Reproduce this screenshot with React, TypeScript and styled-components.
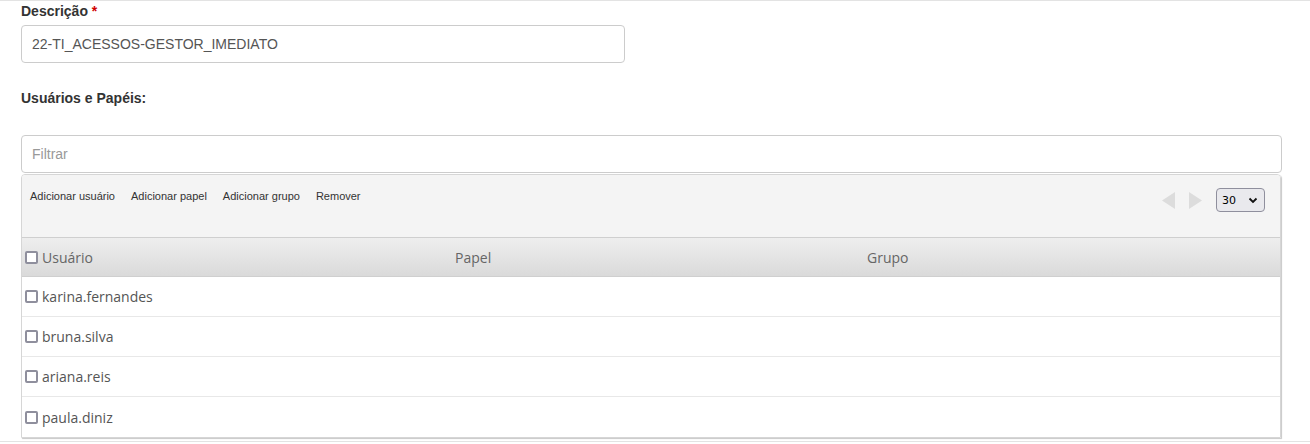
import React from "react";
import styled, { createGlobalStyle } from "styled-components";

const GlobalStyle = createGlobalStyle`
  html, body { margin: 0; padding: 0; background: #ffffff; }
  body { font-family: "Liberation Sans", Arial, sans-serif; }
  * { box-sizing: border-box; }
`;

const Page = styled.div`
  width: 1310px;
  border-top: 1px solid #e3e3e3;
  border-bottom: 1px solid #e3e3e3;
  padding: 0 28px 3px 21px;
`;

const Label = styled.div<{ $mt?: number }>`
  font-family: "Liberation Sans", Arial, sans-serif;
  font-size: 14px;
  font-weight: bold;
  line-height: 18px;
  color: #333;
  margin-top: ${(p) => p.$mt ?? 0}px;
`;

const Required = styled.span`
  color: #d00000;
`;

const TextInput = styled.input<{ $width?: string; $mt?: number }>`
  display: block;
  width: ${(p) => p.$width ?? "100%"};
  height: 38px;
  margin-top: ${(p) => p.$mt ?? 0}px;
  padding: 0 10px;
  border: 1px solid #cccccc;
  border-radius: 4px;
  font-family: "Liberation Sans", Arial, sans-serif;
  font-size: 14px;
  color: #555;
  background: #fff;
  outline: none;
  &::placeholder { color: #999; }
`;

const Panel = styled.div`
  margin-top: 1px;
  width: 1260px;
  border: 1px solid #d6d6d6;
  border-radius: 4px 4px 0 0;
  box-shadow: 1px 1px 1px #c8c8c8;
  overflow: hidden;
`;

const Toolbar = styled.div`
  height: 62px;
  background: #f4f4f4;
  display: flex;
  justify-content: space-between;
  align-items: flex-start;
  padding-right: 15px;
`;

const Actions = styled.div`
  display: flex;
  margin-top: 14px;
`;

const ActionButton = styled.span`
  padding: 0 8px;
  font-family: "Liberation Sans", Arial, sans-serif;
  font-size: 11px;
  line-height: 14px;
  color: #333;
  cursor: pointer;
`;

const Pager = styled.div`
  display: flex;
  align-items: center;
  margin-top: 13px;
`;

const Arrow = styled.span`
  display: flex;
  width: 13px;
  height: 17px;
  margin-right: 14px;
`;

const PageSize = styled.div`
  width: 49px;
  height: 24px;
  border: 1px solid #8f8f9d;
  border-radius: 4px;
  background: #e9e9ed;
  display: flex;
  align-items: center;
  justify-content: space-between;
  padding: 0 6px 0 5px;
  font-family: "DejaVu Sans", sans-serif;
  font-size: 11px;
  color: #000;
`;

const Grid = styled.div`
  display: grid;
  grid-template-columns: 428px 412px 1fr;
`;

const HeaderRow = styled(Grid)`
  height: 40px;
  border-top: 1px solid #cfcfcf;
  border-bottom: 1px solid #cfcfcf;
  background: linear-gradient(#eeeeee, #dadada);
`;

const Row = styled(Grid)`
  height: 40px;
  border-bottom: 1px solid #e8e8e8;
  &:last-child { border-bottom: none; }
`;

const Cell = styled.div<{ $pl?: number; $head?: boolean }>`
  display: flex;
  align-items: center;
  gap: 4px;
  padding-left: ${(p) => p.$pl ?? 5}px;
  font-family: "Open Sans", sans-serif;
  font-size: 14px;
  color: ${(p) => (p.$head ? "#666" : "#555")};
`;

const Check = styled.span`
  display: inline-block;
  width: 13px;
  height: 13px;
  border: 2px solid #8f8f9d;
  border-radius: 2px;
  background: #fff;
`;

const users = ["karina.fernandes", "bruna.silva", "ariana.reis", "paula.diniz"];

export default function App() {
  return (
    <>
      <GlobalStyle />
      <Page>
        <Label $mt={1}>
          Descrição <Required>*</Required>
        </Label>
        <TextInput $width="604px" $mt={5} defaultValue="22-TI_ACESSOS-GESTOR_IMEDIATO" />
        <Label $mt={26}>Usuários e Papéis:</Label>
        <TextInput $mt={28} placeholder="Filtrar" />
        <Panel>
          <Toolbar>
            <Actions>
              <ActionButton>Adicionar usuário</ActionButton>
              <ActionButton>Adicionar papel</ActionButton>
              <ActionButton>Adicionar grupo</ActionButton>
              <ActionButton>Remover</ActionButton>
            </Actions>
            <Pager>
              <Arrow>
                <svg width="13" height="17" viewBox="0 0 13 17">
                  <polygon points="13,0 13,17 0,8.5" fill="#dcdcdc" />
                </svg>
              </Arrow>
              <Arrow>
                <svg width="13" height="17" viewBox="0 0 13 17">
                  <polygon points="0,0 0,17 13,8.5" fill="#dcdcdc" />
                </svg>
              </Arrow>
              <PageSize>
                <span>30</span>
                <svg width="10" height="7" viewBox="0 0 10 7">
                  <polyline points="1.5,1.5 5,5 8.5,1.5" fill="none" stroke="#111" strokeWidth="1.8" />
                </svg>
              </PageSize>
            </Pager>
          </Toolbar>
          <HeaderRow>
            <Cell $pl={3} $head>
              <Check />
              Usuário
            </Cell>
            <Cell $pl={5} $head>Papel</Cell>
            <Cell $pl={5} $head>Grupo</Cell>
          </HeaderRow>
          {users.map((u) => (
            <Row key={u}>
              <Cell $pl={3}>
                <Check />
                {u}
              </Cell>
              <Cell />
              <Cell />
            </Row>
          ))}
        </Panel>
      </Page>
    </>
  );
}
